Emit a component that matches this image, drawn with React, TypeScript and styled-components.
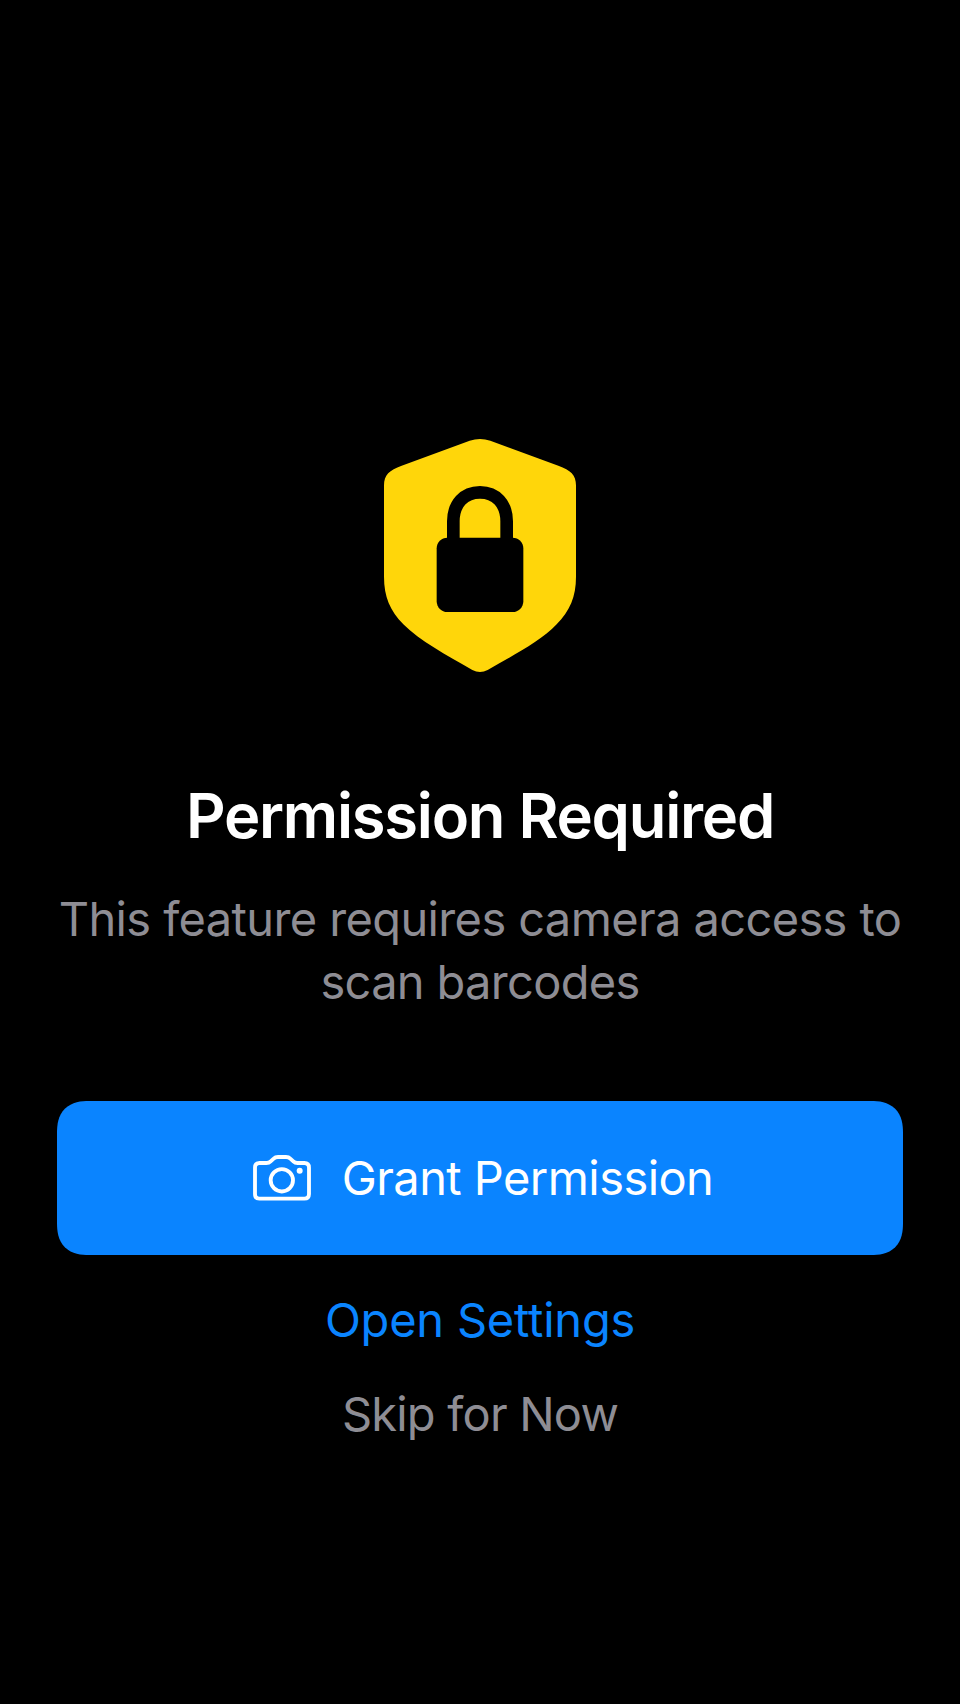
import React from "react";
import styled, { createGlobalStyle } from "styled-components";

const GlobalStyle = createGlobalStyle`
  *, *::before, *::after { box-sizing: border-box; }
  body { margin: 0; background: #000; font-family: Inter, "Liberation Sans", sans-serif; }
`;

const Screen = styled.main`
  min-height: 1704px;
  padding: 439px 57px 0;
  background: #000;
  display: flex;
  flex-direction: column;
  align-items: center;
`;

const ShieldIcon = styled.svg`
  display: block;
  width: 192px;
  height: 233px;
`;

const Title = styled.h1`
  margin: 106px 0 0;
  font-size: 61.5px;
  line-height: 76px;
  font-weight: 600;
  letter-spacing: -1.26px;
  color: #fff;
  white-space: nowrap;
`;

const Message = styled.p`
  margin: 33px 0 0;
  font-size: 47px;
  line-height: 63px;
  text-align: center;
  color: #8e8d94;
`;

const Line = styled.span<{ $tracking: number }>`
  display: block;
  letter-spacing: ${(p) => p.$tracking}px;
  white-space: nowrap;
`;

const Button = styled.button`
  border: 0;
  padding: 0;
  background: none;
  font: inherit;
  font-size: 47px;
  line-height: 63px;
  white-space: nowrap;
`;

const PrimaryButton = styled(Button)`
  width: 100%;
  height: 154px;
  margin-top: 88px;
  padding-left: 6px;
  border-radius: 32px;
  corner-shape: superellipse(1.3);
  background: #0a84ff;
  color: #fff;
  display: flex;
  align-items: center;
  justify-content: center;
  gap: 31px;
`;

const ButtonLabel = styled(Line)`
  margin-bottom: 2px;
`;

const CameraIcon = styled.svg`
  width: 58px;
  height: 46px;
  flex: none;
`;

const TextButton = styled(Button)<{ $color: string; $top: number }>`
  margin-top: ${(p) => p.$top}px;
  color: ${(p) => p.$color};
`;

export default function App() {
  return (
    <>
      <GlobalStyle />
      <Screen>
        <ShieldIcon viewBox="42 27 576 699" aria-hidden="true">
          <path
            fill="#ffd60a"
            d="M299 32Q330 22 361 32L565 107C602 121 618 134 618 166V440C618 500 600 542 560 583C511 634 432 675 353 720Q330 732 307 720C228 675 149 632 100 583C60 542 42 500 42 440V166C42 134 58 121 95 107Z"
          />
          <path
            d="M250 340V274C250 222 282 187 330 187C378 187 410 222 410 274V340"
            fill="none"
            stroke="#000"
            strokeWidth="38"
          />
          <rect x="200" y="323" width="260" height="223" rx="32" />
        </ShieldIcon>
        <Title>Permission Required</Title>
        <Message>
          <Line $tracking={-0.62}>This feature requires camera access to</Line>
          <Line $tracking={-0.68}>scan barcodes</Line>
        </Message>
        <PrimaryButton>
          <CameraIcon viewBox="39 44 174 138" fill="none" stroke="#fff" strokeWidth="11.5" aria-hidden="true">
            <path d="M58 68H79Q87 68 92 63L101 55Q106 50 114 50H138Q146 50 151 55L160 63Q165 68 173 68H193Q207 68 207 82V161Q207 175 193 175H58Q45 175 45 161V82Q45 68 58 68Z" />
            <circle cx="125.500" cy="120" r="33.500" />
            <circle cx="179" cy="91" r="9" fill="#fff" stroke="none" />
          </CameraIcon>
          <ButtonLabel $tracking={-0.56}>Grant Permission</ButtonLabel>
        </PrimaryButton>
        <TextButton $color="#0a84ff" $top={33}>
          <Line $tracking={-0.22}>Open Settings</Line>
        </TextButton>
        <TextButton $color="#8e8d94" $top={31}>
          <Line $tracking={-0.79}>Skip for Now</Line>
        </TextButton>
      </Screen>
    </>
  );
}
